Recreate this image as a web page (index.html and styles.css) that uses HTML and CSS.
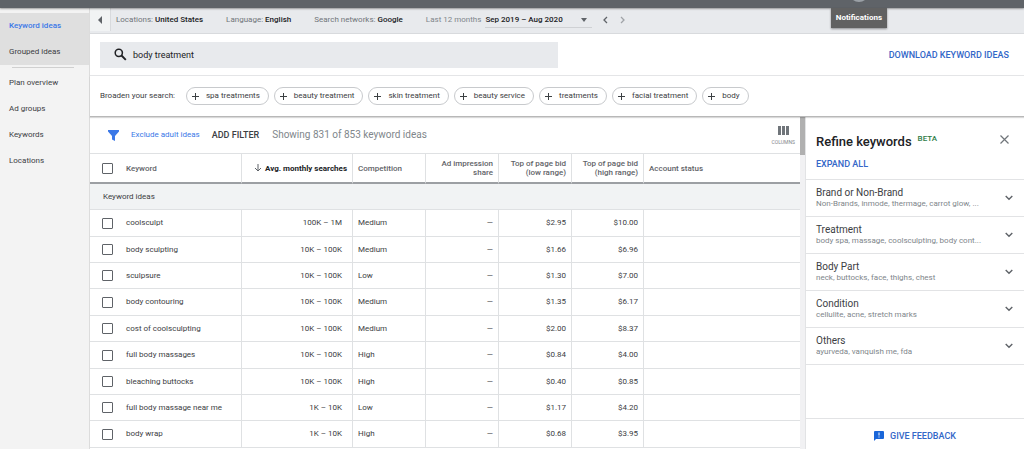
FILE: index.html
```html
<!DOCTYPE html>
<html lang="en">
<head>
<meta charset="utf-8">
<title>Keyword ideas</title>
<link rel="stylesheet" href="styles.css">
</head>
<body>
<div class="app">
  <header class="topbar">
    <button class="avatar" type="button" aria-describedby="tip"></button>
    <div class="tooltip" id="tip" role="tooltip">Notifications</div>
  </header>
  <div class="shell">
    <nav class="sidebar">
      <div class="nav-group nav-active">
        <a class="nav-link current" href="#">Keyword ideas</a>
        <a class="nav-link" href="#">Grouped ideas</a>
      </div>
      <hr class="nav-rule">
      <div class="nav-group">
        <a class="nav-link" href="#">Plan overview</a>
        <a class="nav-link" href="#">Ad groups</a>
        <a class="nav-link" href="#">Keywords</a>
        <a class="nav-link" href="#">Locations</a>
      </div>
    </nav>
    <main class="main">
      <div class="context">
        <button class="collapse" type="button" aria-label="Collapse"><svg width="6" height="10" viewBox="0 0 6 10"><path d="M5 1v8L1 5z" fill="#5f6368"/></svg></button>
        <span class="setting">Locations: <b>United States</b></span>
        <span class="setting">Language: <b>English</b></span>
        <span class="setting">Search networks: <b>Google</b></span>
        <span class="setting period">Last 12 months</span>
        <button class="range" type="button">Sep 2019 – Aug 2020<svg width="6" height="4" viewBox="0 0 6 4"><path d="M0 0h6L3 4z" fill="#5f6368"/></svg></button>
        <button class="step" type="button" aria-label="Previous period"><svg width="6" height="8" viewBox="0 0 6 8"><path d="M5 1L2 4l3 3" fill="none" stroke="#5f6368" stroke-width="1.3"/></svg></button>
        <button class="step" type="button" aria-label="Next period"><svg width="6" height="8" viewBox="0 0 6 8"><path d="M1 1l3 3-3 3" fill="none" stroke="#a0a3a7" stroke-width="1.3"/></svg></button>
      </div>
      <section class="search">
        <label class="searchbox">
          <svg width="13" height="13" viewBox="0 0 13 13"><circle cx="4.800" cy="4.800" r="3.600" fill="none" stroke="#202124" stroke-width="1.500"/><path d="M7.500 7.500l4.300 4.300" stroke="#202124" stroke-width="1.900"/></svg>
          <input type="text" value="body treatment" aria-label="Search keywords">
        </label>
        <button class="text-button download" type="button">DOWNLOAD KEYWORD IDEAS</button>
      </section>
      <section class="broaden">
        <span class="broaden-label">Broaden your search:</span>
        <button class="chip" type="button"><i class="plus"></i>spa treatments</button>
        <button class="chip" type="button"><i class="plus"></i>beauty treatment</button>
        <button class="chip" type="button"><i class="plus"></i>skin treatment</button>
        <button class="chip" type="button"><i class="plus"></i>beauty service</button>
        <button class="chip" type="button"><i class="plus"></i>treatments</button>
        <button class="chip" type="button"><i class="plus"></i>facial treatment</button>
        <button class="chip" type="button"><i class="plus"></i>body</button>
      </section>
      <div class="workspace">
        <section class="results">
          <div class="toolbar">
            <svg class="funnel" width="11" height="11" viewBox="0 0 11 11"><path d="M0 0h11v1.500L7 6v5L4 9.500V6L0 1.500z" fill="#3b78e7"/></svg>
            <a class="exclude" href="#">Exclude adult ideas</a>
            <button class="add-filter" type="button">ADD FILTER</button>
            <span class="count">Showing 831 of 853 keyword ideas</span>
            <button class="columns" type="button"><svg width="11" height="9" viewBox="0 0 11 9"><path d="M0 0h3v9H0zM4 0h3v9H4zM8 0h3v9H8z" fill="#70757a"/></svg>COLUMNS</button>
          </div>
          <table class="ideas">
            <colgroup><col class="c-check"><col class="c-keyword"><col class="c-searches"><col class="c-metric"><col class="c-metric"><col class="c-metric"><col class="c-high"><col></colgroup>
            <thead>
              <tr>
                <th class="check"><input type="checkbox" aria-label="Select all"></th>
                <th class="keyword">Keyword</th>
                <th class="sorted"><svg width="8" height="8" viewBox="0 0 8 8"><path d="M4 0v7M1 4l3 3 3-3" fill="none" stroke="#5f6368"/></svg>Avg. monthly searches</th>
                <th>Competition</th>
                <th class="num">Ad impression share</th>
                <th class="num">Top of page bid (low range)</th>
                <th class="num">Top of page bid (high range)</th>
                <th>Account status</th>
              </tr>
              <tr class="group"><th colspan="8">Keyword ideas</th></tr>
            </thead>
            <tbody>
              <tr><td class="check"><input type="checkbox" aria-label="coolsculpt"></td><td class="keyword">coolsculpt</td><td class="volume">100K – 1M</td><td>Medium</td><td class="num">—</td><td class="num">$2.95</td><td class="num">$10.00</td><td></td></tr>
              <tr><td class="check"><input type="checkbox" aria-label="body sculpting"></td><td class="keyword">body sculpting</td><td class="volume">10K – 100K</td><td>Medium</td><td class="num">—</td><td class="num">$1.66</td><td class="num">$6.96</td><td></td></tr>
              <tr><td class="check"><input type="checkbox" aria-label="sculpsure"></td><td class="keyword">sculpsure</td><td class="volume">10K – 100K</td><td>Low</td><td class="num">—</td><td class="num">$1.30</td><td class="num">$7.00</td><td></td></tr>
              <tr><td class="check"><input type="checkbox" aria-label="body contouring"></td><td class="keyword">body contouring</td><td class="volume">10K – 100K</td><td>Medium</td><td class="num">—</td><td class="num">$1.35</td><td class="num">$6.17</td><td></td></tr>
              <tr><td class="check"><input type="checkbox" aria-label="cost of coolsculpting"></td><td class="keyword">cost of coolsculpting</td><td class="volume">10K – 100K</td><td>Medium</td><td class="num">—</td><td class="num">$2.00</td><td class="num">$8.37</td><td></td></tr>
              <tr><td class="check"><input type="checkbox" aria-label="full body massages"></td><td class="keyword">full body massages</td><td class="volume">10K – 100K</td><td>High</td><td class="num">—</td><td class="num">$0.84</td><td class="num">$4.00</td><td></td></tr>
              <tr><td class="check"><input type="checkbox" aria-label="bleaching buttocks"></td><td class="keyword">bleaching buttocks</td><td class="volume">10K – 100K</td><td>High</td><td class="num">—</td><td class="num">$0.40</td><td class="num">$0.85</td><td></td></tr>
              <tr><td class="check"><input type="checkbox" aria-label="full body massage near me"></td><td class="keyword">full body massage near me</td><td class="volume">1K – 10K</td><td>Low</td><td class="num">—</td><td class="num">$1.17</td><td class="num">$4.20</td><td></td></tr>
              <tr><td class="check"><input type="checkbox" aria-label="body wrap"></td><td class="keyword">body wrap</td><td class="volume">1K – 10K</td><td>High</td><td class="num">—</td><td class="num">$0.68</td><td class="num">$3.95</td><td></td></tr>
            </tbody>
          </table>
        </section>
        <div class="scroll-track"><div class="scroll-thumb"></div></div>
        <aside class="refine">
          <div class="refine-head">
            <h2 class="refine-title">Refine keywords</h2>
            <span class="beta">BETA</span>
            <button class="close" type="button" aria-label="Close"><svg width="9" height="9" viewBox="0 0 9 9"><path d="M.5.5l8 8M8.500.5l-8 8" stroke="#70757a" stroke-width="1.200"/></svg></button>
          </div>
          <button class="text-button expand" type="button">EXPAND ALL</button>
          <div class="facets">
            <button class="facet" type="button"><span class="facet-text"><span class="facet-name">Brand or Non-Brand</span><span class="facet-list">Non-Brands, inmode, thermage, carrot glow, ...</span></span><svg width="8" height="6" viewBox="0 0 8 6"><path d="M.7 1L4 4.300 7.300 1" fill="none" stroke="#5f6368" stroke-width="1.400"/></svg></button>
            <button class="facet" type="button"><span class="facet-text"><span class="facet-name">Treatment</span><span class="facet-list">body spa, massage, coolsculpting, body cont...</span></span><svg width="8" height="6" viewBox="0 0 8 6"><path d="M.7 1L4 4.300 7.300 1" fill="none" stroke="#5f6368" stroke-width="1.400"/></svg></button>
            <button class="facet" type="button"><span class="facet-text"><span class="facet-name">Body Part</span><span class="facet-list">neck, buttocks, face, thighs, chest</span></span><svg width="8" height="6" viewBox="0 0 8 6"><path d="M.7 1L4 4.300 7.300 1" fill="none" stroke="#5f6368" stroke-width="1.400"/></svg></button>
            <button class="facet" type="button"><span class="facet-text"><span class="facet-name">Condition</span><span class="facet-list">cellulite, acne, stretch marks</span></span><svg width="8" height="6" viewBox="0 0 8 6"><path d="M.7 1L4 4.300 7.300 1" fill="none" stroke="#5f6368" stroke-width="1.400"/></svg></button>
            <button class="facet" type="button"><span class="facet-text"><span class="facet-name">Others</span><span class="facet-list">ayurveda, vanquish me, fda</span></span><svg width="8" height="6" viewBox="0 0 8 6"><path d="M.7 1L4 4.300 7.300 1" fill="none" stroke="#5f6368" stroke-width="1.400"/></svg></button>
          </div>
          <button class="text-button feedback" type="button"><svg width="10" height="10" viewBox="0 0 10 10"><path d="M1 0h8q1 0 1 1v6q0 1-1 1H2L0 10V1q0-1 1-1z" fill="#1a66d9"/><path d="M5 1.500v3M5 5.500v1" stroke="#fff" stroke-width="1"/></svg>GIVE FEEDBACK</button>
        </aside>
      </div>
    </main>
  </div>
</div>
</body>
</html>
```
FILE: styles.css
```css
* { box-sizing: border-box; }
body { margin: 0; font: 8px/12px Roboto, sans-serif; color: #3c4043; background: #fff; }
button { margin: 0; padding: 0; border: 0; background: none; font: inherit; color: inherit; text-align: left; cursor: pointer; }
a { color: inherit; text-decoration: none; }
svg { flex: none; display: block; }

.app { display: flex; flex-direction: column; height: 100vh; overflow: hidden; }
.topbar { position: relative; z-index: 2; flex: none; height: 8px; background: #5f6368; box-shadow: 0 1px 2px rgba(0, 0, 0, .35); }
.avatar { position: absolute; right: 155px; bottom: 6px; width: 20px; height: 20px; border-radius: 50%; background: #9aa0a6; }
.tooltip { position: absolute; top: 8px; right: 137px; padding: 4px 5px 5px; background: #616161; color: #fff; font-size: 8px; line-height: 11px; font-weight: 700; box-shadow: 0 1px 2px rgba(0, 0, 0, .4); }

.shell { display: flex; flex: 1; min-height: 0; }
.sidebar { flex: none; width: 90px; padding-top: 5px; background: #f3f3f3; border-right: 1px solid #dcdcdc; }
.nav-active { background: #dfdfdf; }
.nav-link { display: block; padding: 7px 9px; }
.nav-link.current { color: #3b78e7; font-weight: 500; }
.nav-rule { height: 1px; margin: 2px 15px 2px 12px; border: 0; background: #d0d0d0; }

.main { display: flex; flex: 1; flex-direction: column; min-width: 0; }
.context { display: flex; flex: none; align-items: center; height: 26px; padding-bottom: 2px; background: #e8eaed; border-bottom: 1px solid #d8dadd; color: #70757a; }
.collapse { display: flex; align-items: center; justify-content: center; align-self: stretch; width: 21px; margin-right: 5px; background: #f1f3f4; border-right: 1px solid #d8dadd; }
.setting { margin-right: 23px; white-space: nowrap; }
.setting b { color: #202124; font-weight: 500; }
.period { margin-right: 4px; color: #80868b; }
.range { display: flex; align-items: center; justify-content: space-between; width: 107px; padding: 2px 5px 1px 0; margin-right: 10px; border-bottom: 1px solid #cfd1d4; color: #202124; font-weight: 500; }
.step { margin-right: 12px; }

.search { display: flex; flex: none; align-items: center; justify-content: space-between; height: 42px; padding: 0 15px 0 10px; border-bottom: 1px solid #e4e5e7; }
.searchbox { display: flex; align-items: center; gap: 6px; width: 100%; max-width: 458px; height: 26px; padding-left: 14px; background: #e8eaed; }
.searchbox input { flex: 1; min-width: 0; padding: 0; border: 0; outline: 0; background: none; font: inherit; font-size: 9px; color: #202124; }
.text-button { color: #3367c8; font-size: 9px; font-weight: 500; white-space: nowrap; }
.broaden { display: flex; flex: none; align-items: center; gap: 5px; height: 41px; padding-left: 10px; border-bottom: 1px solid #b8b8b8; box-shadow: 0 1px 1px rgba(0, 0, 0, .15); z-index: 1; }
.broaden-label { margin-right: 6px; }
.chip { display: flex; align-items: center; gap: 7px; height: 18px; padding: 0 8px 0 5px; border: 1px solid #c8cacd; border-radius: 9px; white-space: nowrap; }
.plus { width: 7px; height: 7px; background: linear-gradient(#3c4043, #3c4043) center / 7px 1px no-repeat, linear-gradient(#3c4043, #3c4043) center / 1px 7px no-repeat; }

.workspace { display: flex; flex: 1; min-height: 0; }
.results { flex: 1; min-width: 0; overflow: hidden; }
.toolbar { display: flex; align-items: center; height: 36px; padding: 0 5px 0 18px; }
.exclude { margin: 0 12px; color: #3b78e7; }
.add-filter { margin-right: 13px; font-size: 9px; font-weight: 500; }
.count { color: #80868b; font-size: 10px; }
.columns { display: flex; flex-direction: column; align-items: center; gap: 4px; margin-left: auto; color: #80868b; font-size: 5px; line-height: 6px; }

.ideas { width: 100%; table-layout: fixed; border-collapse: separate; border-spacing: 0; }
.c-check { width: 30px; }
.c-keyword { width: 122px; }
.c-searches { width: 111px; }
.c-metric { width: 73px; }
.c-high { width: 72px; }
.ideas th, .ideas td { padding: 0 5px; border-right: 1px solid #dfe1e3; font-weight: 400; text-align: left; vertical-align: middle; white-space: nowrap; }
.ideas thead th { height: 31px; border-top: 1px solid #dfe1e3; border-bottom: 2px solid #9c9fa3; line-height: 9px; color: #5f6368; font-weight: 500; white-space: normal; }
.ideas .group th { height: 26px; padding-left: 13px; border-top: 0; border-bottom: 1px solid #dfe1e3; background: #f1f3f4; font-weight: 400; color: #3c4043; }
.ideas td { height: 26px; border-bottom: 1px solid #dfe1e3; }
.ideas tbody tr:nth-child(5n + 1) td, .ideas tbody tr:nth-child(5n + 4) td { height: 27px; }
.ideas th:last-child, .ideas td:last-child { border-right: 0; }
.ideas .check { padding: 0 0 0 12px; border-right: 0; }
.ideas .keyword { padding-left: 6px; }
.ideas .num { text-align: right; }
.ideas .volume { padding-right: 10px; text-align: right; }
.ideas thead .sorted { text-align: right; color: #202124; font-weight: 700; white-space: nowrap; }
.sorted svg { display: inline-block; margin-right: 3px; vertical-align: middle; }
.ideas input { display: block; appearance: none; width: 11px; height: 11px; margin: 0; border: 1px solid #5f6368; border-radius: 1px; }

.scroll-track { flex: none; width: 6px; background: #f1f1f3; border-right: 1px solid #e2e3e5; }
.scroll-thumb { height: 38px; background: #b0b0b0; }

.refine { display: flex; flex: none; flex-direction: column; width: 218px; }
.refine-head { display: flex; align-items: flex-start; padding: 16px 15px 0 10px; }
.refine-title { margin: 0; font-size: 13px; line-height: 18px; font-weight: 500; color: #202124; }
.beta { margin-left: 6px; color: #2e7d46; font-size: 8px; font-weight: 500; }
.close { margin: 2px 0 0 auto; }
.expand { margin: 7px 10px 9px; }
.facets { border-top: 1px solid #e2e3e5; }
.facet { display: flex; align-items: center; justify-content: space-between; width: 100%; height: 37px; padding: 0 11px 0 10px; border-bottom: 1px solid #e2e3e5; }
.facet-text { display: flex; flex-direction: column; }
.facet-name { font-size: 10px; line-height: 12px; }
.facet-list { color: #80868b; font-size: 8px; line-height: 10px; white-space: nowrap; }
.feedback { display: flex; align-items: center; justify-content: center; gap: 6px; height: 31px; margin-top: auto; padding-top: 4px; border-top: 1px solid #e2e3e5; }
```
